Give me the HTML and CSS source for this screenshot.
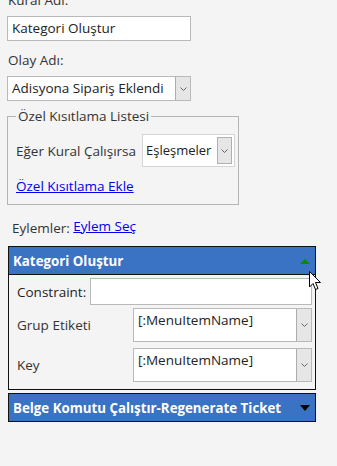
FILE: index.html
```html
<!DOCTYPE html>
<html lang="tr">
<head>
  <meta charset="UTF-8" />
  <title>Kural</title>
  <link rel="stylesheet" href="styles.css">
</head>
<body>

<div class="sayfa">
  <div class="etiket ust">Kural Adı:</div>
  <div class="kutu genis">Kategori Oluştur</div>

  <div class="etiket">Olay Adı:</div>
  <div class="secim genis">
    <span class="secim-yazi">Adisyona Sipariş Eklendi</span>
    <span class="ok"><svg width="7" height="4" viewBox="0 0 7 4"><path d="M0.5 0.5 L3.5 3.5 L6.5 0.5" fill="none" stroke="#666" stroke-width="1"/></svg></span>
  </div>

  <fieldset class="liste">
    <legend>Özel Kısıtlama Listesi</legend>
    <div class="satir">
      <span class="satir-etiket">Eğer Kural Çalışırsa</span>
      <div class="secim kucuk">
        <span class="secim-yazi">Eşleşmeler</span>
        <span class="ok"><svg width="7" height="4" viewBox="0 0 7 4"><path d="M0.5 0.5 L3.5 3.5 L6.5 0.5" fill="none" stroke="#666" stroke-width="1"/></svg></span>
      </div>
    </div>
    <a href="#" class="baglanti">Özel Kısıtlama Ekle</a>
  </fieldset>

  <div class="eylemler">Eylemler: <a href="#" class="baglanti yukari">Eylem Seç</a></div>

  <!-- Açık eylem paneli -->
  <div class="panel">
    <div class="baslik">
      <span>Kategori Oluştur</span>
      <span class="ucgen yesil"></span>
    </div>
    <div class="govde">
      <div class="alan">
        <span class="alan-etiket koyu">Constraint:</span>
        <div class="kutu alan-kutu"></div>
      </div>
      <div class="alan">
        <span class="alan-etiket uzun">Grup Etiketi</span>
        <div class="secim liste-secim">
          <span class="secim-yazi">[:MenuItemName]</span>
          <span class="ok"><svg width="7" height="4" viewBox="0 0 7 4"><path d="M0.5 0.5 L3.5 3.5 L6.5 0.5" fill="none" stroke="#666" stroke-width="1"/></svg></span>
        </div>
      </div>
      <div class="alan arali">
        <span class="alan-etiket uzun">Key</span>
        <div class="secim liste-secim">
          <span class="secim-yazi">[:MenuItemName]</span>
          <span class="ok"><svg width="7" height="4" viewBox="0 0 7 4"><path d="M0.5 0.5 L3.5 3.5 L6.5 0.5" fill="none" stroke="#666" stroke-width="1"/></svg></span>
        </div>
      </div>
    </div>
  </div>

  <!-- Kapalı eylem paneli -->
  <div class="panel kapali">
    <div class="baslik">
      <span>Belge Komutu Çalıştır-Regenerate Ticket</span>
      <span class="ucgen siyah"></span>
    </div>
  </div>
</div>

<svg class="imlec" width="13" height="20" viewBox="0 0 13 20">
  <path d="M0.5 0.5 L0.5 16 L4 12.5 L6.5 18.5 L9 17.5 L6.5 11.5 L11.5 11.5 Z" fill="#fff" stroke="#000" stroke-width="1"/>
</svg>

</body>
</html>
```

FILE: styles.css
```css
* { box-sizing: border-box; }
body {
  margin: 0;
  background: #f4f4f4;
  font-family: 'Open Sans', sans-serif;
  font-size: 13.5px;
  color: #333;
}

.sayfa {
  padding-left: 7px;
  margin-top: -10px;
}

.etiket {
  line-height: 20px;
  margin-top: 9px;
  margin-bottom: 6px;
  padding-left: 1px;
}
.etiket.ust { margin-top: 0; }

.kutu {
  background: white;
  border: 1px solid #b9b9b9;
  height: 25px;
  line-height: 23px;
  padding-left: 4px;
  color: #222;
}
.genis { width: 184px; }

/* Açılır liste */
.secim {
  display: flex;
  background: white;
  border: 1px solid #b9b9b9;
  height: 25px;
  color: #222;
}
.secim-yazi {
  flex: 1;
  padding-left: 4px;
  line-height: 23px;
  white-space: nowrap;
  overflow: hidden;
}
.ok {
  width: 15px;
  background: #e6e6e6;
  border-left: 1px solid #adadad;
  display: flex;
  align-items: center;
  justify-content: center;
}

.liste {
  width: 232px;
  margin: 5px 0 0 0;
  padding: 0 0 8px 8px;
  border: 1px solid #b4b4b4;
  min-width: 0;
}
.liste legend {
  padding: 0 2px;
  line-height: 20px;
}

.satir {
  display: flex;
  align-items: center;
  margin-top: 8px;
}
.satir-etiket {
  width: 126px;
  line-height: 20px;
  white-space: nowrap;
}
.kucuk {
  width: 93px;
  height: 33px;
  border-color: #d4d4d4;
  padding: 2px 2px 2px 0;
}
.kucuk .secim-yazi {
  line-height: 27px;
  font-size: 13px;
  padding-left: 3px;
}
.kucuk .ok {
  border: 1px solid #b0b0b0;
}

.baglanti {
  display: block;
  color: #0000ee;
  line-height: 20px;
  margin-top: 9px;
}

.eylemler {
  margin: 13px 0 0 5px;
  line-height: 20px;
}
.eylemler .baglanti {
  display: inline;
  margin: 0;
  position: relative;
  top: -2px;
}

/* Eylem paneli */
.panel {
  width: 308px;
  margin: 8px 0 0 1px;
  border: 1px solid #111;
}
.panel.kapali { margin-top: 3px; }

.baslik {
  display: flex;
  align-items: center;
  justify-content: space-between;
  background: #3a72c4;
  color: white;
  font-weight: bold;
  font-size: 13.3px;
  height: 27px;
  padding: 0 5px 0 4px;
  white-space: nowrap;
}

.ucgen {
  width: 0;
  height: 0;
  border-left: 5px solid transparent;
  border-right: 5px solid transparent;
}
.yesil { border-bottom: 5px solid #0a8a0a; margin-top: 1px; }
.siyah { border-top: 6px solid #000; }

.govde {
  border-top: 1px solid #111;
  padding: 3px 3px 7px 8px;
}

.alan {
  display: flex;
  align-items: center;
  margin-top: 3px;
}
.alan:first-child { margin-top: 0; }
.alan.arali { margin-top: 6px; }

.alan-etiket {
  width: 73px;
  line-height: 20px;
}
.alan-etiket.koyu { color: #1e1e1e; }
.alan-etiket.uzun { width: 116px; }

.alan-kutu {
  flex: 1;
  height: 27px;
}

.liste-secim {
  flex: 1;
  height: 34px;
}
.liste-secim .secim-yazi {
  line-height: 20px;
  padding-top: 1px;
}

.imlec {
  position: absolute;
  left: 309px;
  top: 271px;
}
```
